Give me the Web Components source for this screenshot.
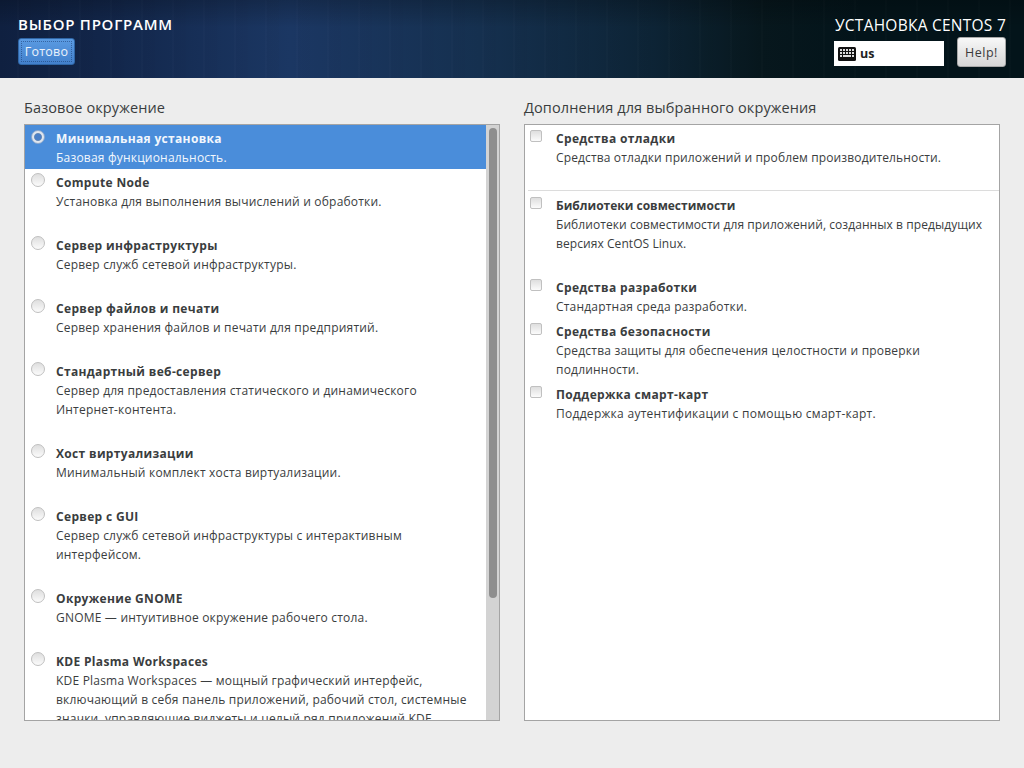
<!DOCTYPE html>
<html lang="ru">
<head>
<meta charset="utf-8">
<title>Выбор программ</title>
<style>
  html, body { margin: 0; height: 100%; }
  body { width: 1024px; height: 768px; overflow: hidden; background: #ededed; font-family: "Open Sans", "Liberation Sans", sans-serif; color: #2e3436; }
</style>
</head>
<body>
<spoke-screen>
  <spoke-header slot="header"></spoke-header>
  <option-pane slot="left" heading="Базовое окружение" scroll>
    <option-row type="radio" checked title="Минимальная установка">Базовая функциональность.</option-row>
    <option-row type="radio" gap title="Compute Node">Установка для выполнения вычислений и обработки.</option-row>
    <option-row type="radio" gap title="Сервер инфраструктуры">Сервер служб сетевой инфраструктуры.</option-row>
    <option-row type="radio" gap title="Сервер файлов и печати">Сервер хранения файлов и печати для предприятий.</option-row>
    <option-row type="radio" gap title="Стандартный веб-сервер">Сервер для предоставления статического и динамического<br>Интернет-контента.</option-row>
    <option-row type="radio" gap title="Хост виртуализации">Минимальный комплект хоста виртуализации.</option-row>
    <option-row type="radio" gap title="Сервер с GUI">Сервер служб сетевой инфраструктуры с интерактивным<br>интерфейсом.</option-row>
    <option-row type="radio" gap title="Окружение GNOME">GNOME — интуитивное окружение рабочего стола.</option-row>
    <option-row type="radio" title="KDE Plasma Workspaces">KDE Plasma Workspaces — мощный графический интерфейс,<br>включающий в себя панель приложений, рабочий стол, системные<br>значки, управляющие виджеты и целый ряд приложений KDE.</option-row>
  </option-pane>
  <option-pane slot="right" heading="Дополнения для выбранного окружения">
    <option-row type="check" gap divider title="Средства отладки" style="letter-spacing:.13px">Средства отладки приложений и проблем производительности.</option-row>
    <option-row type="check" gap title="Библиотеки совместимости" style="letter-spacing:.07px;--title-ls:0">Библиотеки совместимости для приложений, созданных в предыдущих<br>версиях CentOS Linux.</option-row>
    <option-row type="check" title="Средства разработки">Стандартная среда разработки.</option-row>
    <option-row type="check" title="Средства безопасности">Средства защиты для обеспечения целостности и проверки<br>подлинности.</option-row>
    <option-row type="check" title="Поддержка смарт-карт" style="letter-spacing:.28px">Поддержка аутентификации с помощью смарт-карт.</option-row>
  </option-pane>
</spoke-screen>

<script>
class SpokeScreen extends HTMLElement {
  constructor() {
    super();
    this.attachShadow({ mode: 'open' });
    this.shadowRoot.innerHTML = `
    <style>
    :host { display: block; width: 1024px; height: 768px; }
    main {
      display: grid;
      grid-template-columns: 476px 476px;
      column-gap: 24px;
      padding: 20px 24px 0;
    }
    </style>
    <slot name="header"></slot>
    <main>
      <slot name="left"></slot>
      <slot name="right"></slot>
    </main>`;
  }
}

class SpokeHeader extends HTMLElement {
  constructor() {
    super();
    this.attachShadow({ mode: 'open' });
    this.shadowRoot.innerHTML = `
    <style>
    :host {
      display: flex;
      justify-content: space-between;
      box-sizing: border-box;
      height: 78px;
      padding: 16px 18px 0;
      color: #fff;
      background:
        linear-gradient(rgba(0,0,0,.22), rgba(0,0,0,0) 35%),
        repeating-linear-gradient(90deg, rgba(255,255,255,0) 0 17px, rgba(255,255,255,.012) 17px 19px, rgba(0,0,0,.015) 19px 31px),
        linear-gradient(90deg, #0f2040 0, #12264a 100px, #1b3763 290px, #15304f 480px, #0d2436 650px, #07171d 760px, #03141a 860px, #03141a 100%);
    }
    h1 { margin: 0; font-size: 15px; line-height: 16px; font-weight: 600; letter-spacing: .75px; white-space: nowrap; }
    .done {
      display: block;
      box-sizing: border-box;
      width: 57px;
      height: 27px;
      margin-top: 6px;
      padding: 0;
      border: 1px solid #2f66a6;
      border-radius: 3px;
      background: linear-gradient(#5b9be2, #4280cc);
      color: #eaf2fc;
      font: 12.5px "Open Sans", "Liberation Sans", sans-serif;
      letter-spacing: .2px;
      outline: 1px dotted rgba(20,50,100,.5);
      outline-offset: -4px;
    }
    .right { display: grid; grid-template-columns: 110px 49px; column-gap: 13px; align-content: start; width: 172px; }
    .product { grid-column: 1 / 3; font-size: 15.5px; line-height: 18px; letter-spacing: .25px; white-space: nowrap; text-align: right; }
    .layout {
      display: flex;
      align-items: center;
      gap: 4px;
      height: 25px;
      margin-top: 7px;
      padding-left: 4px;
      box-sizing: border-box;
      background: #fff;
      color: #222;
      font-size: 12.5px;
      font-weight: 700;
    }
    .help {
      box-sizing: border-box;
      width: 49px;
      height: 30px;
      margin-top: 3px;
      padding: 0;
      border: 1px solid #a8a8a8;
      border-radius: 3px;
      background: linear-gradient(#f8f8f8, #d6d6d6);
      color: #3a3a3a;
      font: 12.5px "Open Sans", "Liberation Sans", sans-serif;
      letter-spacing: .5px;
    }
    svg { display: block; }
    </style>
    <div>
      <h1>ВЫБОР ПРОГРАММ</h1>
      <button class="done">Готово</button>
    </div>
    <div class="right">
      <div class="product">УСТАНОВКА CENTOS 7</div>
      <div class="layout">
        <svg width="18" height="14" viewBox="0 0 18 14">
          <rect x="0" y="0" width="18" height="14" rx="1.5" fill="#111"/>
          <g fill="#ddd">
            <rect x="2" y="2" width="2" height="2"/><rect x="5" y="2" width="2" height="2"/><rect x="8" y="2" width="2" height="2"/><rect x="11" y="2" width="2" height="2"/><rect x="14" y="2" width="2" height="2"/>
            <rect x="2" y="5" width="2" height="2"/><rect x="5" y="5" width="2" height="2"/><rect x="8" y="5" width="2" height="2"/><rect x="11" y="5" width="2" height="2"/><rect x="14" y="5" width="2" height="2"/>
            <rect x="2" y="8" width="2" height="2"/><rect x="5" y="8" width="8" height="2"/><rect x="14" y="8" width="2" height="2"/>
          </g>
        </svg>
        <span>us</span>
      </div>
      <button class="help">Help!</button>
    </div>`;
  }
}

class OptionPane extends HTMLElement {
  constructor() {
    super();
    this.attachShadow({ mode: 'open' });
  }
  connectedCallback() {
    const bar = this.hasAttribute('scroll')
      ? '<div class="track"><div class="thumb"></div></div>' : '';
    this.shadowRoot.innerHTML = `
    <style>
    :host { display: block; }
    h2 { margin: 0 0 7px; font-size: 14.5px; line-height: 19px; font-weight: 400; letter-spacing: .1px; color: #3a3d3e; }
    .box {
      display: flex;
      box-sizing: border-box;
      height: 597px;
      overflow: hidden;
      background: #fff;
      border: 1px solid #a4a4a4;
    }
    .rows { flex: 1; min-width: 0; overflow: hidden; }
    .track { flex: none; width: 13px; background: #d3d3d3; padding-top: 3px; box-sizing: border-box; }
    .thumb { width: 8px; height: 470px; margin-left: 3px; border-radius: 4px; background: #8e8e8e; }
    </style>
    <h2>${this.getAttribute('heading')}</h2>
    <div class="box"><div class="rows"><slot></slot></div>${bar}</div>`;
  }
}

class OptionRow extends HTMLElement {
  constructor() {
    super();
    this.attachShadow({ mode: 'open' });
  }
  connectedCallback() {
    const isRadio = this.getAttribute('type') === 'radio';
    this.shadowRoot.innerHTML = `
    <style>
    :host {
      display: grid;
      grid-template-columns: 24px 1fr;
      box-sizing: border-box;
      padding: 4px 0 2px 7px;
      color: #3a3d3e;
      font-size: 12px;
      line-height: 19px;
      letter-spacing: .2px;
      white-space: nowrap;
    }
    :host([gap]) { padding-bottom: 21px; }
    :host([checked]) { background: #4a8dda; color: #f2f7fd; }
    :host([divider]) { padding-bottom: 23px; border-bottom: 1px solid #dcdcdc; margin: 0 0 1px 3px; padding-left: 4px; }
    .mark {
      box-sizing: border-box;
      border: 1px solid #c0c0c0;
      background: linear-gradient(#dedede, #fbfbfb);
    }
    .mark.radio { width: 14px; height: 14px; margin-left: -1px; border-radius: 50%; }
    .mark.check { width: 12px; height: 12px; margin: 1px 0 0 -2px; border-radius: 2px; }
    .mark.on { margin-top: 1px; background: radial-gradient(circle, #4a80c8 0 3px, #6f8fb8 3.6px, #dfe6ef 4.4px); border-color: #8fa9cb; }
    b { display: block; font-weight: 700; letter-spacing: var(--title-ls, .33px); }
    </style>
    <div class="mark ${isRadio ? 'radio' : 'check'} ${this.hasAttribute('checked') ? 'on' : ''}"></div>
    <div><b>${this.getAttribute('title')}</b><slot></slot></div>`;
  }
}

customElements.define('spoke-screen', SpokeScreen);
customElements.define('spoke-header', SpokeHeader);
customElements.define('option-pane', OptionPane);
customElements.define('option-row', OptionRow);
</script>
</body>
</html>
